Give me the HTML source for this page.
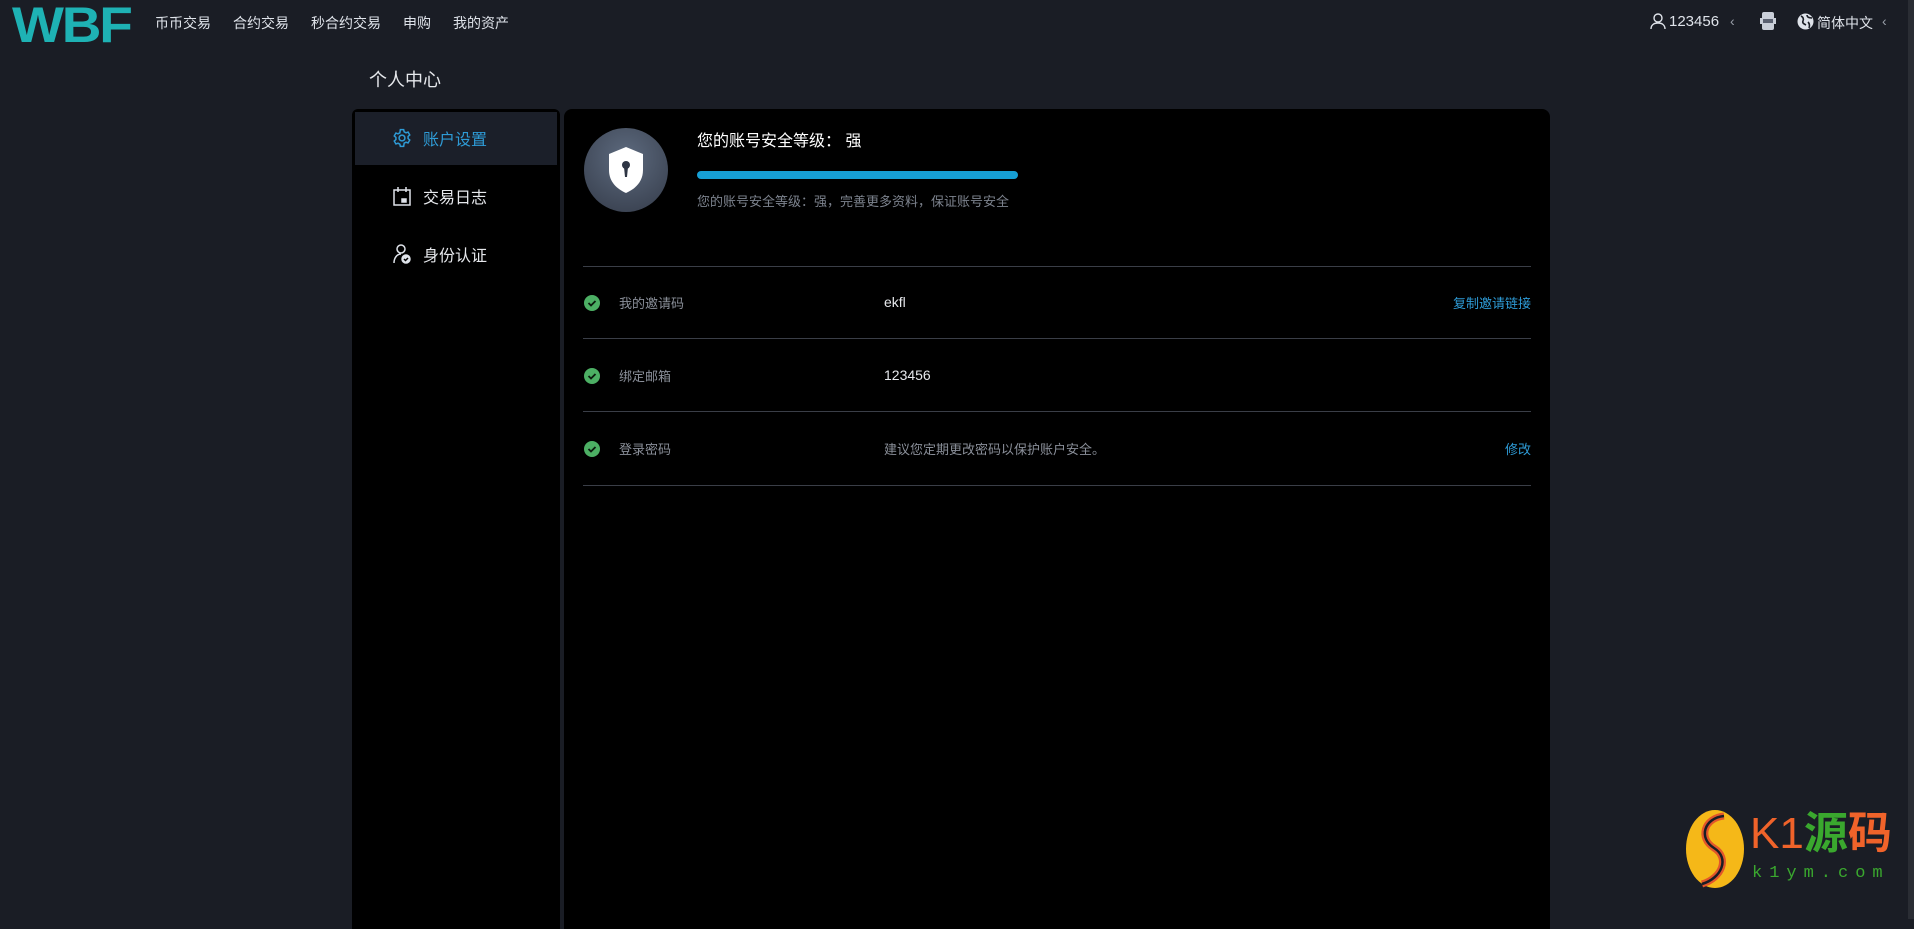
<!DOCTYPE html>
<html><head><meta charset="utf-8"><style>
*{margin:0;padding:0;box-sizing:border-box}
body{width:1914px;height:919px;background:#1a1d25;overflow:hidden;position:relative;font-family:"Liberation Sans","Noto Sans CJK SC",sans-serif;color:#e6e8ec}
.a{position:absolute;white-space:nowrap}
.nav{font-size:14px;color:#dfe3ea;top:13px}
.sb{left:352px;top:109px;width:208px;height:820px;background:#000;border-radius:6px 6px 0 0}
.act{left:355px;top:112px;width:202px;height:53px;background:#1b1f29}
.mi{font-size:16px;color:#e6e8ec}
.panel{left:564px;top:109px;width:986px;height:820px;background:#000;border-radius:8px 8px 0 0}
.line{left:583px;width:948px;height:1px;background:#3a3e47}
.lbl{font-size:13px;color:#8a8f99;left:619px}
.val{font-size:14px;color:#e6e8ec;left:884px}
.ck{left:584px;width:16px;height:16px;border-radius:50%;background:#4caf64}
.ck svg{display:block}
.lnk{font-size:13px;color:#2e9bd6;right:383px}
</style></head><body>
<div class="a" style="left:12px;top:-4px;font-size:50px;font-weight:bold;color:#1eb2b4;letter-spacing:-2px;transform:scaleX(1.1);transform-origin:left">WBF</div>
<div class="a nav" style="left:155px">币币交易</div>
<div class="a nav" style="left:233px">合约交易</div>
<div class="a nav" style="left:311px">秒合约交易</div>
<div class="a nav" style="left:403px">申购</div>
<div class="a nav" style="left:453px">我的资产</div>
<svg class="a" style="left:1650px;top:13px" width="16" height="17" viewBox="0 0 16 17" fill="none" stroke="#dfe3ea" stroke-width="1.4"><circle cx="8" cy="5" r="4"/><path d="M1 16c0-4 3-6 7-6s7 2 7 6"/></svg>
<div class="a nav" style="left:1669px;font-size:15px;top:13px">123456</div>
<div class="a nav" style="left:1730px;color:#9aa0aa">‹</div>
<svg class="a" style="left:1760px;top:12px" width="16" height="18" viewBox="0 0 16 18"><rect x="2" y="0" width="12" height="18" rx="2" fill="#c9ced8"/><rect x="0" y="6" width="16" height="6" fill="#c9ced8"/><rect x="3" y="7" width="10" height="4" fill="#5a6070"/></svg>
<svg class="a" style="left:1797px;top:13px" width="17" height="17" viewBox="0 0 17 17"><circle cx="8.5" cy="8.5" r="8" fill="#dfe3ea"/><path d="M4 3c2 1 3 3 2 5s1 3 3 4M10 2c0 2 2 3 5 3M11 9c1 1 2 3 1 6" stroke="#1a1d25" stroke-width="1.6" fill="none"/></svg>
<div class="a nav" style="left:1817px">简体中文</div>
<div class="a nav" style="left:1882px;color:#9aa0aa">‹</div>
<div class="a" style="left:1908px;top:0;width:6px;height:919px;background:#2a2d34"></div>

<div class="a" style="left:369px;top:66px;font-size:18px;color:#e6e8ec">个人中心</div>

<div class="a sb"></div>
<div class="a act"></div>
<svg class="a" style="left:392px;top:128px" width="20" height="20" viewBox="0 0 24 24" fill="none" stroke="#2e9bd6" stroke-width="1.8"><circle cx="12" cy="12" r="3.5"/><path d="M10 2h4l.6 2.6 2.2 1.2 2.5-.9 2 3.4-2 1.8v2.6l2 1.8-2 3.4-2.5-.9-2.2 1.2L14 22h-4l-.6-2.6-2.2-1.2-2.5.9-2-3.4 2-1.8v-2.6l-2-1.8 2-3.4 2.5.9 2.2-1.2z"/></svg>
<div class="a mi" style="left:423px;top:126px;color:#2e9bd6">账户设置</div>
<svg class="a" style="left:393px;top:187px" width="18" height="19" viewBox="0 0 18 19" fill="none" stroke="#dfe3ea" stroke-width="1.5"><rect x="1" y="3" width="16" height="15"/><path d="M5 0v5M13 0v5"/><rect x="9" y="12" width="4" height="3" fill="#dfe3ea"/></svg>
<div class="a mi" style="left:423px;top:184px">交易日志</div>
<svg class="a" style="left:393px;top:244px" width="19" height="20" viewBox="0 0 19 20" fill="none" stroke="#dfe3ea" stroke-width="1.5"><circle cx="8" cy="5" r="4"/><path d="M1 19c0-5 3-9 7-9"/><circle cx="13" cy="15" r="4" fill="#dfe3ea"/><path d="M11 15l1.5 1.5L15 14" stroke="#000"/></svg>
<div class="a mi" style="left:423px;top:242px">身份认证</div>

<div class="a panel"></div>
<div class="a" style="left:584px;top:128px;width:84px;height:84px;border-radius:50%;background:radial-gradient(circle at 50% 35%,#5d6a7e,#343b49)"></div>
<svg class="a" style="left:606px;top:146px" width="40" height="48" viewBox="0 0 40 48"><path d="M20 1L37 8v16c0 12-8 19-17 23C11 43 3 36 3 24V8z" fill="#fff"/><circle cx="20" cy="19" r="4" fill="#2e3544"/><path d="M18 21h4l-1 10h-2z" fill="#2e3544"/></svg>
<div class="a" style="left:697px;top:127px;font-size:16px;color:#fff">您的账号安全等级： 强</div>
<div class="a" style="left:697px;top:171px;width:321px;height:8px;border-radius:4px;background:#169fd5"></div>
<div class="a" style="left:697px;top:191px;font-size:13px;color:#7d838e">您的账号安全等级：强，完善更多资料，保证账号安全</div>

<div class="a line" style="top:266px"></div>
<div class="a line" style="top:338px"></div>
<div class="a line" style="top:411px"></div>
<div class="a line" style="top:485px"></div>

<div class="a ck" style="top:295px"><svg width="16" height="16"><path d="M4.5 8l2.5 2.5L11.5 6" stroke="#0b1a0e" stroke-width="1.8" fill="none"/></svg></div>
<div class="a lbl" style="top:293px">我的邀请码</div>
<div class="a val" style="top:294px">ekfl</div>
<div class="a lnk" style="top:293px">复制邀请链接</div>

<div class="a ck" style="top:368px"><svg width="16" height="16"><path d="M4.5 8l2.5 2.5L11.5 6" stroke="#0b1a0e" stroke-width="1.8" fill="none"/></svg></div>
<div class="a lbl" style="top:366px">绑定邮箱</div>
<div class="a val" style="top:367px">123456</div>

<div class="a ck" style="top:441px"><svg width="16" height="16"><path d="M4.5 8l2.5 2.5L11.5 6" stroke="#0b1a0e" stroke-width="1.8" fill="none"/></svg></div>
<div class="a lbl" style="top:439px">登录密码</div>
<div class="a lbl" style="top:439px;left:884px">建议您定期更改密码以保护账户安全。</div>
<div class="a lnk" style="top:439px">修改</div>

<svg class="a" style="left:1684px;top:808px" width="62" height="82" viewBox="0 0 62 82"><ellipse cx="31" cy="41" rx="29" ry="39" fill="#f5b818"/><path d="M40 8C20 10 14 30 30 40s8 30-12 36" stroke="#e2562a" stroke-width="7" fill="none"/><path d="M40 8C20 10 14 30 30 40s8 30-12 36" stroke="#1a1d25" stroke-width="2.5" fill="none"/></svg>
<div class="a" style="left:1750px;top:808px;font-size:44px;line-height:52px;color:#f0632a">K1<span style="color:#3aa82e;font-weight:bold">源</span><span style="font-weight:bold">码</span></div>
<div class="a" style="left:1752px;top:864px;font-size:17px;color:#3aa82e;letter-spacing:7px;font-family:'Liberation Mono',monospace">k1ym.com</div>
</body></html>
